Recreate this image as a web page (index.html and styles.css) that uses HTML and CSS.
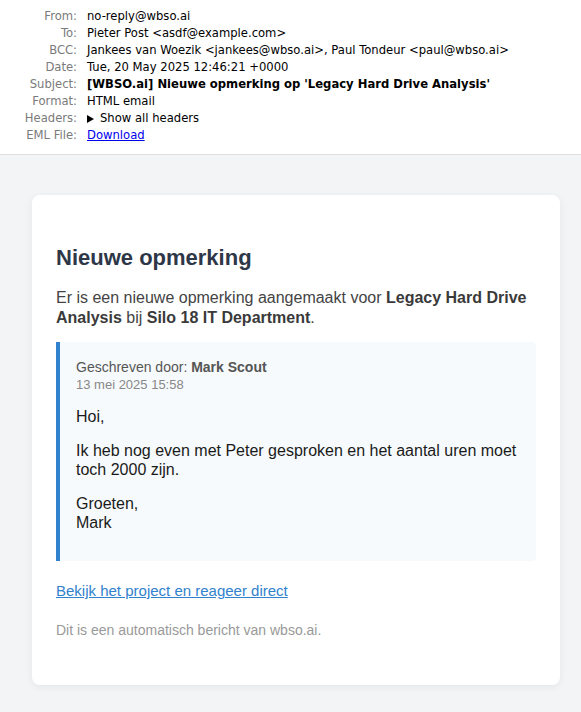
FILE: index.html
```html
<!DOCTYPE html>
<html lang="nl">
<head>
<meta charset="utf-8">
<title>Nieuwe opmerking</title>
<link rel="stylesheet" href="styles.css">
</head>
<body>
<header class="mail-header">
  <div class="row"><span class="label">From:</span><span class="value">no-reply@wbso.ai</span></div>
  <div class="row"><span class="label">To:</span><span class="value">Pieter Post &lt;asdf@example.com&gt;</span></div>
  <div class="row"><span class="label">BCC:</span><span class="value">Jankees van Woezik &lt;jankees@wbso.ai&gt;, Paul Tondeur &lt;paul@wbso.ai&gt;</span></div>
  <div class="row"><span class="label">Date:</span><span class="value">Tue, 20 May 2025 12:46:21 +0000</span></div>
  <div class="row"><span class="label">Subject:</span><span class="value bold">[WBSO.ai] Nieuwe opmerking op 'Legacy Hard Drive Analysis'</span></div>
  <div class="row"><span class="label">Format:</span><span class="value">HTML email</span></div>
  <div class="row"><span class="label">Headers:</span><span class="value toggle"><svg class="tri" width="7" height="8" viewBox="0 0 7 8"><path d="M0 0 L7 4 L0 8 Z" fill="#000"/></svg>Show all headers</span></div>
  <div class="row"><span class="label">EML File:</span><span class="value"><a class="dl" href="#">Download</a></span></div>
</header>
<main class="page">
  <section class="card">
    <h2 class="title">Nieuwe opmerking</h2>
    <p class="intro">Er is een nieuwe opmerking aangemaakt voor <strong>Legacy Hard Drive Analysis</strong> bij <strong>Silo 18 IT Department</strong>.</p>
    <div class="quote">
      <div class="author">Geschreven door: <strong>Mark Scout</strong></div>
      <div class="date">13 mei 2025 15:58</div>
      <div class="body">
        <p>Hoi,</p>
        <p>Ik heb nog even met Peter gesproken en het aantal uren moet toch 2000 zijn.</p>
        <p>Groeten,<br>Mark</p>
      </div>
    </div>
    <a class="cta" href="#">Bekijk het project en reageer direct</a>
    <p class="footer">Dit is een automatisch bericht van wbso.ai.</p>
  </section>
</main>
</body>
</html>
```
FILE: styles.css
```css
html, body {
  margin: 0;
  padding: 0;
}
body {
  background: #f3f4f6;
  font-family: "Liberation Sans", Arial, sans-serif;
}
.mail-header {
  background: #ffffff;
  border-bottom: 1px solid #dedede;
  padding: 8px 0 10px;
  font-family: "DejaVu Sans", sans-serif;
  font-size: 11.6px;
}
.row {
  display: grid;
  grid-template-columns: 77px 1fr;
  column-gap: 10px;
  height: 17px;
  line-height: 17px;
  white-space: nowrap;
}
.label {
  text-align: right;
  color: #7a7a7a;
}
.value {
  color: #000;
}
.bold {
  font-weight: bold;
}
.toggle {
  display: flex;
  align-items: center;
  gap: 6px;
}
.tri {
  display: block;
}
.dl {
  color: #0000ee;
  text-decoration: underline;
}
.page {
  padding: 40px 21px 27px 32px;
}
.card {
  background: #ffffff;
  border-radius: 8px;
  box-shadow: 0 2px 8px rgba(0, 0, 0, 0.06);
  padding: 24px 24px 24px;
  display: flex;
  flex-direction: column;
}
.title {
  margin: 26px 0 0;
  font-size: 22px;
  line-height: 26px;
  font-weight: bold;
  color: #2d3748;
}
.intro {
  margin: 17px 0 0;
  font-size: 16px;
  line-height: 20px;
  color: #444444;
}
.intro strong {
  color: #3a3a3a;
}
.quote {
  margin-top: 14px;
  background: #f7fafc;
  border-left: 4px solid #3182ce;
  border-radius: 0 4px 4px 0;
  padding: 17px 16px 14px 16px;
}
.author {
  font-size: 14px;
  line-height: 16px;
  color: #555555;
}
.date {
  margin-top: 2px;
  font-size: 13px;
  line-height: 15px;
  color: #888888;
}
.body {
  margin-top: 15px;
  font-size: 16px;
  line-height: 19px;
  color: #1a1a1a;
}
.body p {
  margin: 0 0 15px;
}
.cta {
  align-self: flex-start;
  margin-top: 21px;
  font-size: 15px;
  line-height: 18px;
  color: #3182ce;
  text-decoration: underline;
}
.footer {
  margin: 22px 0 22px;
  font-size: 14px;
  line-height: 17px;
  color: #999999;
}
```
